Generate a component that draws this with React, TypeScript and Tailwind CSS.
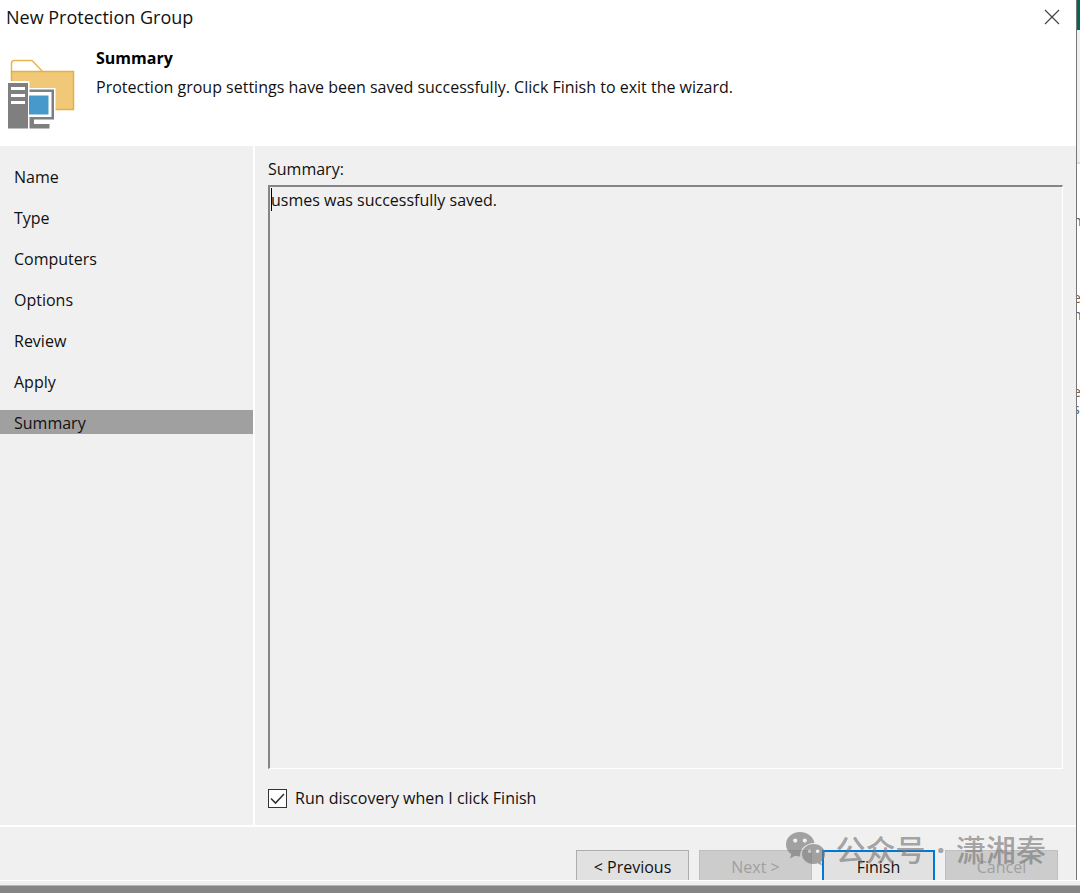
import { useState } from "react";

const steps = ["Name", "Type", "Computers", "Options", "Review", "Apply", "Summary"];

function GroupIcon() {
  return (
    <svg viewBox="0 0 70 74" className="h-[74px] w-[70px] shrink-0" aria-hidden="true">
      <path d="M4.500 16V7.500Q4.500 4.500 7.500 4.500H25L35.500 15.500" fill="#fff" stroke="#ecb64e" strokeWidth="1.500" />
      <path d="M4.500 15.500H66.500V53.500H4.500Z" fill="#f0c878" stroke="#e5af42" strokeWidth="1.500" />
      <path d="M0 25H22.500V32H48.500V64.500H44V74H0Z" fill="#fff" />
      <path d="M1 27H21V72.500H1Z" fill="#7f7f7f" />
      <path d="M4 31H18V34H4ZM4 38H18V41H4ZM4 45H18V48H4Z" fill="#fff" />
      <path d="M22.500 33.500H47V63.500H27V68H42.500V72.500H22.500Z" fill="#7f7f7f" />
      <path d="M22 36H44.500V61H22Z" fill="#fff" />
      <path d="M22 39.500H41.500V58.500H22Z" fill="#4799cb" />
    </svg>
  );
}

function ChatLogo() {
  return (
    <svg viewBox="0 0 42 36" className="h-9 w-[42px]" aria-hidden="true">
      <path
        fillRule="evenodd"
        fill="currentColor"
        d="M15 1C6.800 1 1 6.700 1 13.500c0 4 2 7.400 5.200 9.700L5 27.500l5.200-2.700c1.800.5 3.200.7 5 .7C14.500 18.500 20 12 29.500 12 28 5 22 1 15 1ZM10.200 7.500a2.100 2.100 0 1 1 0 4.200 2.100 2.100 0 0 1 0-4.200Zm9.600 0a2.100 2.100 0 1 1 0 4.200 2.100 2.100 0 0 1 0-4.200Z"
      />
      <path
        fillRule="evenodd"
        fill="currentColor"
        d="M28.500 13C21.800 13 17 17.500 17 23s4.800 10 11.500 10c1.500 0 3-.3 4.300-.7l4.200 2.300-1.200-3.600c2.700-2 4.300-4.800 4.300-8 0-5.500-5-10-11.600-10Zm-3.900 5.500a1.800 1.800 0 1 1 0 3.600 1.800 1.800 0 0 1 0-3.600Zm8 0a1.800 1.800 0 1 1 0 3.600 1.800 1.800 0 0 1 0-3.600Z"
      />
    </svg>
  );
}

function BackgroundWindow() {
  return (
    <div
      aria-hidden="true"
      className="flex w-[3px] shrink-0 flex-col overflow-hidden bg-white text-sm/[17px] text-[#4a5a78]"
    >
      <div className="h-[30px] shrink-0 bg-[#006a50]" />
      <div className="h-[134px] shrink-0 border-b-2 border-[#dcdcdc] bg-[#f0f0f0]" />
      <div className="mt-12 -ml-1">n</div>
      <div className="mt-[60px] -ml-1 text-[#8a5a3a]">e</div>
      <div className="-ml-1">n</div>
      <div className="mt-[60px] -ml-1 text-[#8a5a3a]">e</div>
      <div className="-ml-1">s</div>
    </div>
  );
}

export default function App() {
  const [step, setStep] = useState("Summary");
  const [discover, setDiscover] = useState(true);
  const button = "h-[34px] w-[113px] shrink-0 border";

  return (
    <div className="flex h-screen flex-col overflow-hidden bg-[#f0f0f0] font-['Open_Sans','Noto_Sans_CJK_SC',sans-serif] text-base/6 text-[#111]">
      <div className="flex min-h-0 flex-1">
        <main className="flex min-w-0 flex-1 flex-col border-r border-[#777]">
          <header className="h-[146px] shrink-0 bg-white">
            <div className="flex h-[34px] items-center justify-between pr-4 pl-1.5">
              <h1 className="text-lg/6">New Protection Group</h1>
              <button aria-label="Close" className="p-0">
                <svg viewBox="0 0 16 16" className="size-4" fill="none" stroke="#444" strokeWidth="1.200">
                  <path d="M1 1l14 14M15 1L1 15" />
                </svg>
              </button>
            </div>
            <div className="flex gap-[19px] pl-[7px]">
              <div className="pt-[22px]">
                <GroupIcon />
              </div>
              <div className="flex flex-col gap-[5px] pt-3">
                <h2 className="font-bold text-black">Summary</h2>
                <p>Protection group settings have been saved successfully. Click Finish to exit the wizard.</p>
              </div>
            </div>
          </header>

          <div className="flex min-h-0 flex-1 border-b-2 border-white">
            <nav className="flex w-[255px] shrink-0 flex-col gap-[17px] border-r-2 border-white pt-[18px]">
              {steps.map((name) => (
                <button
                  key={name}
                  onClick={() => setStep(name)}
                  className={
                    name === step
                      ? "h-6 bg-[#a0a0a0] pt-px pl-3.5 text-left"
                      : "h-6 pt-px pl-3.5 text-left"
                  }
                >
                  {name}
                </button>
              ))}
            </nav>

            <section className="flex min-w-0 flex-1 flex-col pt-[11px] pr-[13px] pb-[15px] pl-[13px]">
              <label htmlFor="summary">Summary:</label>
              <div className="relative mt-1 flex min-h-0 flex-1">
                <textarea
                  id="summary"
                  readOnly
                  value="usmes was successfully saved."
                  className="min-w-0 flex-1 resize-none border-t-2 border-r border-b border-l-2 border-t-[#858585] border-r-white border-b-white border-l-[#858585] px-px py-px outline-none"
                />
                <span className="absolute top-[3px] left-[3px] h-[23px] w-px bg-black" />
              </div>
              <label className="mt-[17px] flex items-center gap-2">
                <span className="relative flex size-[19px]">
                  <input
                    type="checkbox"
                    checked={discover}
                    onChange={(e) => setDiscover(e.target.checked)}
                    className="peer size-[19px] appearance-none border border-[#333] bg-white"
                  />
                  <svg
                    viewBox="0 0 19 19"
                    className="pointer-events-none absolute inset-0 hidden size-[19px] peer-checked:block"
                    fill="none"
                    stroke="#333"
                    strokeWidth="1.600"
                  >
                    <path d="M3 9.500l4.500 4.500L16 5" />
                  </svg>
                </span>
                Run discovery when I click Finish
              </label>
            </section>
          </div>

          <footer className="relative h-[53px] shrink-0 overflow-hidden">
            <div className="flex justify-end gap-2.5 pt-[23px] pr-[18px]">
              <button className={`${button} border-[#adadad] bg-[#e1e1e1]`}>&lt; Previous</button>
              <button disabled className={`${button} border-[#bfbfbf] bg-[#cccccc] text-[#a0a0a0]`}>
                Next &gt;
              </button>
              <button className="h-[34px] w-[113px] shrink-0 border-2 border-[#0078d7] bg-[#e1e1e1]">Finish</button>
              <button disabled className={`${button} border-[#bfbfbf] bg-[#cccccc] text-[#a0a0a0]`}>
                Cancel
              </button>
            </div>
            <div className="pointer-events-none absolute top-1 right-[30px] flex items-start gap-2 text-[#777]/65">
              <ChatLogo />
              <div className="flex gap-[11px] text-[30px]/[38px] font-medium">
                <span>公众号</span>
                <span className="font-bold">·</span>
                <span>潇湘秦</span>
              </div>
            </div>
          </footer>
        </main>
        <BackgroundWindow />
      </div>
      <div className="h-[13px] shrink-0 border-t border-white">
        <div className="mt-1 h-2 border-t border-[#b5b5b5] bg-[#858585]" />
      </div>
    </div>
  );
}
